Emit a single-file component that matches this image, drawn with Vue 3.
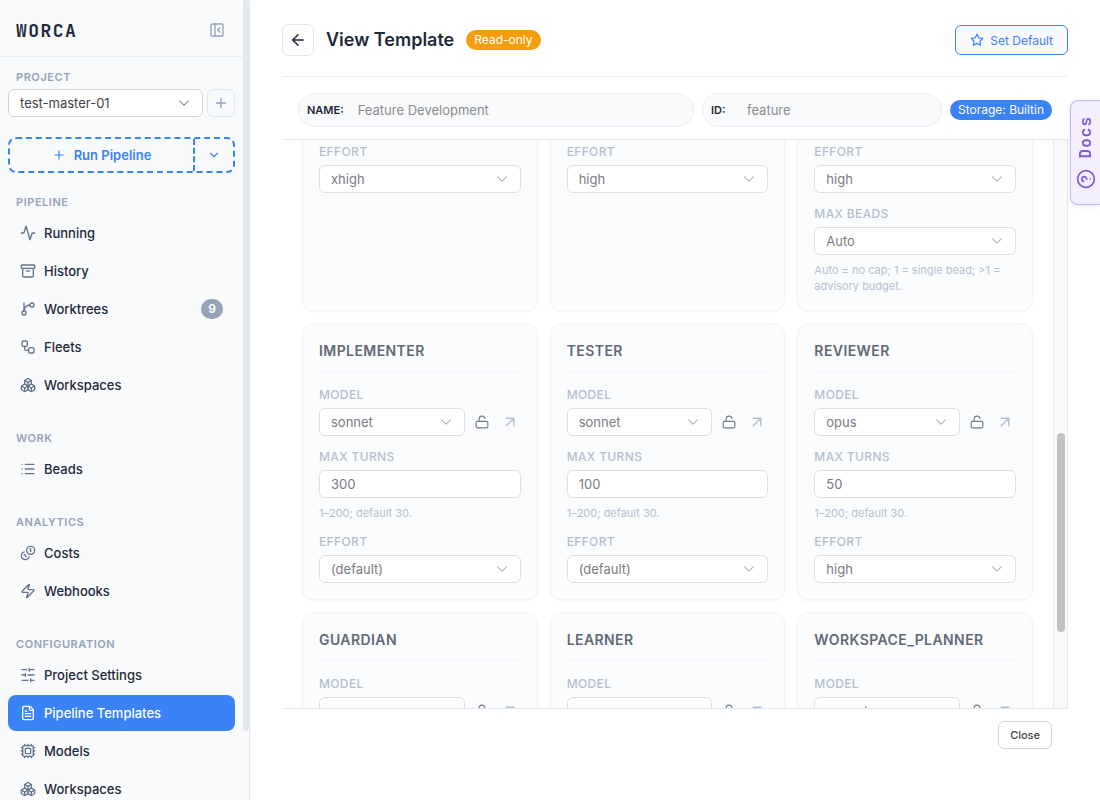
<template>
    <div class="layout">
        <aside class="sidebar">
            <div class="sidebar-content">
                <header class="brand">
                    <span class="logo">WORCA</span>
                    <button class="collapse-btn" aria-label="Collapse sidebar">
                        <svg class="icon" viewBox="0 0 24 24">
                            <rect x="3" y="3" width="18" height="18" rx="2" />
                            <path d="M9 3v18M16 15l-3-3 3-3" />
                        </svg>
                    </button>
                </header>

                <div class="project">
                    <label class="section-title" for="project">Project</label>
                    <div class="project-row">
                        <div class="select-wrap project-select">
                            <select id="project" v-model="project">
                                <option>test-master-01</option>
                            </select>
                            <svg class="chevron" viewBox="0 0 16 16"><path :d="chevron" /></svg>
                        </div>
                        <button class="add-btn" aria-label="Add project">
                            <svg class="icon" viewBox="0 0 24 24"><path d="M5 12h14M12 5v14" /></svg>
                        </button>
                    </div>
                    <div class="run-group">
                        <button class="run-btn">
                            <svg class="icon" viewBox="0 0 24 24"><path d="M5 12h14M12 5v14" /></svg>
                            Run Pipeline
                        </button>
                        <button class="run-more" aria-label="More run options">
                            <svg class="icon" viewBox="0 0 24 24"><path d="m6 9 6 6 6-6" /></svg>
                        </button>
                    </div>
                </div>

                <nav>
                    <section v-for="section in sections" :key="section.title" class="nav-section">
                        <h2 class="section-title">{{ section.title }}</h2>
                        <a
                            v-for="item in section.items"
                            :key="item.label"
                            href="#"
                            class="nav-item"
                            :class="{ active: item.active }"
                        >
                            <svg class="icon" viewBox="0 0 24 24">
                                <path v-for="d in icons[item.icon]" :key="d" :d="d" />
                            </svg>
                            <span>{{ item.label }}</span>
                            <span v-if="item.count" class="count">{{ item.count }}</span>
                        </a>
                    </section>
                </nav>
            </div>
            <div class="sidebar-scroll"><div class="sidebar-thumb"></div></div>
        </aside>

        <main class="main">
            <header class="page-header">
                <button class="back-btn" aria-label="Back">
                    <svg class="icon" viewBox="0 0 24 24"><path d="m12 19-7-7 7-7M19 12H5" /></svg>
                </button>
                <h1>View Template</h1>
                <span class="badge warning">Read-only</span>
                <button class="default-btn">
                    <svg class="icon" viewBox="0 0 24 24">
                        <path d="M12 2l3.09 6.26L22 9.27l-5 4.87 1.18 6.88L12 17.77l-6.18 3.25L7 14.14 2 9.27l6.91-1.01L12 2z" />
                    </svg>
                    Set Default
                </button>
            </header>

            <div class="meta-bar">
                <div class="pill pill-name">
                    <label for="tpl-name">NAME:</label>
                    <input id="tpl-name" type="text" value="Feature Development" disabled />
                </div>
                <div class="pill pill-id">
                    <label for="tpl-id">ID:</label>
                    <input id="tpl-id" type="text" value="feature" disabled />
                </div>
                <span class="badge primary">Storage: Builtin</span>
            </div>

            <div class="scroll-area">
                <div class="agents">
                    <article
                        v-for="(agent, i) in agents"
                        :key="i"
                        class="card"
                        :class="{ continued: !agent.name }"
                    >
                        <h3 v-if="agent.name">{{ agent.name }}</h3>
                        <div v-for="field in agent.fields" :key="field.label" class="field">
                            <label :for="fieldId(i, field)">{{ field.label }}</label>
                            <div class="control-row">
                                <input
                                    v-if="field.type === 'number'"
                                    :id="fieldId(i, field)"
                                    class="text-input"
                                    type="text"
                                    :value="field.value"
                                    disabled
                                />
                                <div v-else class="select-wrap">
                                    <select :id="fieldId(i, field)" disabled>
                                        <option>{{ field.value }}</option>
                                    </select>
                                    <svg class="chevron" viewBox="0 0 16 16"><path :d="chevron" /></svg>
                                </div>
                                <template v-if="field.type === 'model'">
                                    <button class="icon-btn lock" aria-label="Unlock model" disabled>
                                        <svg class="icon" viewBox="0 0 24 24">
                                            <rect x="2" y="11" width="20" height="11" rx="2" />
                                            <path d="M7 11V7a5 5 0 0 1 9.9-1" />
                                        </svg>
                                    </button>
                                    <button class="icon-btn open" aria-label="Open model" disabled>
                                        <svg class="icon" viewBox="0 0 24 24"><path d="M7 7h10v10M7 17 17 7" /></svg>
                                    </button>
                                </template>
                            </div>
                            <p v-if="field.hint" class="hint">{{ field.hint }}</p>
                        </div>
                    </article>
                </div>
                <div class="track"><div class="thumb"></div></div>
            </div>

            <footer class="page-footer">
                <button class="close-btn">Close</button>
            </footer>
        </main>

        <button class="docs-tab">
            <span>Docs</span>
            <svg class="icon" viewBox="0 0 24 24">
                <circle cx="12" cy="12" r="10" />
                <path d="M9.09 9a3 3 0 0 1 5.83 1c0 2-3 3-3 3M12 17h.01" />
            </svg>
        </button>
    </div>
</template>

<script setup>
import { ref } from 'vue';

const project = ref('test-master-01');

const chevron = 'M1.646 4.646a.5.5 0 0 1 .708 0L8 10.293l5.646-5.647a.5.5 0 0 1 .708.708l-6 6a.5.5 0 0 1-.708 0l-6-6a.5.5 0 0 1 0-.708z';

const icons = {
    activity: ['M22 12h-2.48a2 2 0 0 0-1.93 1.46l-2.35 8.36a.25.25 0 0 1-.48 0L9.24 2.18a.25.25 0 0 0-.48 0l-2.35 8.36A2 2 0 0 1 4.49 12H2'],
    archive: ['M3 3h18a1 1 0 0 1 1 1v3a1 1 0 0 1-1 1H3a1 1 0 0 1-1-1V4a1 1 0 0 1 1-1z', 'M4 8v11a2 2 0 0 0 2 2h12a2 2 0 0 0 2-2V8', 'M10 12h4'],
    branch: ['M6 3v12', 'M21 6a3 3 0 1 1-6 0 3 3 0 0 1 6 0z', 'M9 18a3 3 0 1 1-6 0 3 3 0 0 1 6 0z', 'M15 6a9 9 0 0 0-9 9'],
    workflow: ['M5 3h4a2 2 0 0 1 2 2v4a2 2 0 0 1-2 2H5a2 2 0 0 1-2-2V5a2 2 0 0 1 2-2z', 'M7 11v4a2 2 0 0 0 2 2h4', 'M15 13h4a2 2 0 0 1 2 2v4a2 2 0 0 1-2 2h-4a2 2 0 0 1-2-2v-4a2 2 0 0 1 2-2z'],
    boxes: [
        'M2.97 12.92A2 2 0 0 0 2 14.63v3.24a2 2 0 0 0 .97 1.71l3 1.8a2 2 0 0 0 2.06 0L12 19v-5.5l-5-3-4.03 2.42Z',
        'm7 16.5-4.74-2.85',
        'm7 16.5 5-3',
        'M7 16.5v5.17',
        'M12 13.5V19l3.97 2.38a2 2 0 0 0 2.06 0l3-1.8a2 2 0 0 0 .97-1.71v-3.24a2 2 0 0 0-.97-1.71L17 10.5l-5 3Z',
        'm17 16.5-5-3',
        'm17 16.5 4.74-2.85',
        'M17 16.5v5.17',
        'M7.97 4.42A2 2 0 0 0 7 6.13v4.37l5 3 5-3V6.13a2 2 0 0 0-.97-1.71l-3-1.8a2 2 0 0 0-2.06 0l-3 1.8Z',
        'M12 8 7.26 5.15',
        'm12 8 4.74-2.85',
        'M12 13.5V8'
    ],
    list: ['M3 5h.01', 'M3 12h.01', 'M3 19h.01', 'M8 5h13', 'M8 12h13', 'M8 19h13'],
    coins: ['M22 8a6 6 0 1 1-12 0 6 6 0 0 1 12 0z', 'M15 6h1v4', 'm6.134 14.768.866-.5 2 3.464', 'M13.744 17.736a6 6 0 1 1-7.48-7.48'],
    zap: ['M4 14a1 1 0 0 1-.78-1.63l9.9-10.2a.5.5 0 0 1 .86.46l-1.92 6.02A1 1 0 0 0 13 10h7a1 1 0 0 1 .78 1.63l-9.9 10.2a.5.5 0 0 1-.86-.46l1.92-6.02A1 1 0 0 0 11 14z'],
    sliders: ['M21 4h-7', 'M10 4H3', 'M21 12h-9', 'M8 12H3', 'M21 20h-5', 'M12 20H3', 'M14 2v4', 'M8 10v4', 'M16 18v4'],
    file: ['M15 2H6a2 2 0 0 0-2 2v16a2 2 0 0 0 2 2h12a2 2 0 0 0 2-2V7Z', 'M14 2v4a2 2 0 0 0 2 2h4', 'M10 9H8', 'M16 13H8', 'M16 17H8'],
    cpu: [
        'M6 4h12a2 2 0 0 1 2 2v12a2 2 0 0 1-2 2H6a2 2 0 0 1-2-2V6a2 2 0 0 1 2-2z',
        'M9 8h6a1 1 0 0 1 1 1v6a1 1 0 0 1-1 1H9a1 1 0 0 1-1-1V9a1 1 0 0 1 1-1z',
        'M12 20v2M12 2v2M17 20v2M17 2v2M7 20v2M7 2v2',
        'M2 12h2M2 17h2M2 7h2M20 12h2M20 17h2M20 7h2'
    ]
};

const sections = [
    {
        title: 'Pipeline',
        items: [
            { label: 'Running', icon: 'activity' },
            { label: 'History', icon: 'archive' },
            { label: 'Worktrees', icon: 'branch', count: 9 },
            { label: 'Fleets', icon: 'workflow' },
            { label: 'Workspaces', icon: 'boxes' }
        ]
    },
    { title: 'Work', items: [{ label: 'Beads', icon: 'list' }] },
    {
        title: 'Analytics',
        items: [
            { label: 'Costs', icon: 'coins' },
            { label: 'Webhooks', icon: 'zap' }
        ]
    },
    {
        title: 'Configuration',
        items: [
            { label: 'Project Settings', icon: 'sliders' },
            { label: 'Pipeline Templates', icon: 'file', active: true },
            { label: 'Models', icon: 'cpu' },
            { label: 'Workspaces', icon: 'boxes' }
        ]
    }
];

const effort = (value) => ({ label: 'Effort', type: 'select', value });
const model = (value) => ({ label: 'Model', type: 'model', value });
const turns = (value) => ({ label: 'Max Turns', type: 'number', value, hint: '1–200; default 30.' });

// agents without a name are the ones scrolled half out of view
const agents = [
    { fields: [effort('xhigh')] },
    { fields: [effort('high')] },
    {
        fields: [
            effort('high'),
            { label: 'Max Beads', type: 'select', value: 'Auto', hint: 'Auto = no cap; 1 = single bead; >1 = advisory budget.' }
        ]
    },
    { name: 'Implementer', fields: [model('sonnet'), turns(300), effort('(default)')] },
    { name: 'Tester', fields: [model('sonnet'), turns(100), effort('(default)')] },
    { name: 'Reviewer', fields: [model('opus'), turns(50), effort('high')] },
    { name: 'Guardian', fields: [model('opus')] },
    { name: 'Learner', fields: [model('opus')] },
    { name: 'Workspace_Planner', fields: [model('sonnet')] }
];

const fieldId = (index, field) => `agent-${index}-${field.label.toLowerCase().replace(' ', '-')}`;
</script>

<style>
body {
    margin: 0;
    background-color: #fff;
}
</style>

<style scoped>
* {
    box-sizing: border-box;
}

.layout {
    display: flex;
    height: 100vh;
    overflow: hidden;
    font-family: Inter, "Liberation Sans", sans-serif;
    font-size: 13px;
    color: #1e293b;
}

button, input, select {
    font: inherit;
    margin: 0;
}

button {
    display: flex;
    align-items: center;
    justify-content: center;
    padding: 0;
    background: none;
    border: none;
    cursor: pointer;
}

.icon {
    width: 16px;
    height: 16px;
    flex-shrink: 0;
    fill: none;
    stroke: currentColor;
    stroke-width: 2;
    stroke-linecap: round;
    stroke-linejoin: round;
}

/* sidebar */
.sidebar {
    display: flex;
    width: 250px;
    flex-shrink: 0;
    background-color: #f8fafc;
    border-right: 1px solid #e2e8f0;
    overflow: hidden;
}

.sidebar-content {
    flex: 1;
}

.sidebar-scroll {
    width: 6px;
}

.sidebar-thumb {
    height: 91.4%;
    background-color: #e2e8f0;
    border-radius: 3px;
}

.brand {
    display: flex;
    align-items: center;
    justify-content: space-between;
    height: 57px;
    padding: 4px 18px 0 16px;
    border-bottom: 1px solid #e9eef4;
}

.logo {
    font-family: "JetBrains Mono", "Liberation Mono", monospace;
    font-size: 18px;
    font-weight: 700;
    letter-spacing: 0.08em;
}

.collapse-btn {
    color: #94a3b8;
}

.project {
    padding: 12px 8px 0;
}

.section-title {
    display: block;
    margin: 0;
    padding-left: 8px;
    font-size: 11px;
    font-weight: 600;
    line-height: 16px;
    letter-spacing: 0.05em;
    text-transform: uppercase;
    color: #94a3b8;
}

.project-row {
    display: flex;
    gap: 4px;
    margin-top: 4px;
}

.add-btn {
    width: 28px;
    border: 1px solid #e2e8f0;
    border-radius: 6px;
    color: #94a3b8;
}

.run-group {
    display: flex;
    height: 36px;
    margin-top: 20px;
    border: 2px dashed #3b82f6;
    border-radius: 8px;
    color: #3b82f6;
}

.run-btn {
    flex: 1;
    gap: 8px;
    color: inherit;
    font-weight: 600;
}

.run-btn .icon {
    width: 14px;
    height: 14px;
}

.run-more {
    width: 40px;
    border-left: 2px dashed #3b82f6;
    color: inherit;
}

.run-more .icon {
    width: 14px;
    height: 14px;
}

.nav-section {
    display: flex;
    flex-direction: column;
    gap: 2px;
    padding: 21px 8px 6px;
}

.nav-section .section-title {
    padding-bottom: 3px;
}

.nav-item {
    display: flex;
    align-items: center;
    gap: 8px;
    height: 36px;
    padding: 0 12px;
    border-radius: 8px;
    color: #1e293b;
    font-size: 13px;
    font-weight: 500;
    text-decoration: none;
}

.nav-item .icon {
    color: #64748b;
}

.nav-item.active, .nav-item.active .icon {
    color: #fff;
}

.nav-item.active {
    background-color: #3b82f6;
}

.count {
    width: 22px;
    margin-left: auto;
    border-radius: 10px;
    background-color: #94a3b8;
    color: #fff;
    font-size: 12px;
    font-weight: 600;
    line-height: 20px;
    text-align: center;
}

/* page */
.main {
    display: flex;
    flex-direction: column;
    flex: 1;
    min-width: 0;
    padding: 0 32px 51px;
}

.page-header {
    display: flex;
    align-items: center;
    gap: 12px;
    padding: 24px 0 20px;
    border-bottom: 1px solid #e9eef4;
}

.back-btn {
    width: 32px;
    height: 32px;
    border: 1px solid #e2e8f0;
    border-radius: 6px;
    color: #1e293b;
}

.back-btn .icon {
    width: 18px;
    height: 18px;
}

h1 {
    margin: 0;
    font-size: 18px;
    font-weight: 600;
    line-height: 24px;
}

.badge {
    padding: 0 8px;
    border-radius: 10px;
    color: #fff;
    font-size: 12px;
    line-height: 20px;
    white-space: nowrap;
}

.warning {
    background-color: #f59e0b;
}

.primary {
    background-color: #3b82f6;
}

.default-btn {
    gap: 6px;
    height: 30px;
    margin-left: auto;
    padding: 0 14px;
    border: 1px solid #3b82f6;
    border-radius: 6px;
    background-color: #f8fafc;
    color: #3b82f6;
    font-size: 12px;
}

.default-btn .icon {
    width: 14px;
    height: 14px;
}

.meta-bar {
    display: flex;
    align-items: center;
    gap: 8px;
    padding: 16px 16px 12px;
    border-bottom: 1px solid #e2e8f0;
}

.pill {
    display: flex;
    align-items: center;
    height: 34px;
    padding: 0 8px;
    border: 1px solid #e9eef5;
    border-radius: 17px;
    background-color: #f8fafc;
}

.pill-name {
    flex: 1;
}

.pill-id {
    width: 240px;
}

.pill label {
    min-width: 22px;
    font-size: 11px;
    font-weight: 600;
}

.pill input {
    flex: 1;
    min-width: 0;
    padding: 0 14px;
    border: none;
    background: none;
    color: #8b8c8f;
}

.scroll-area {
    display: flex;
    flex: 1;
    min-height: 0;
    overflow: hidden;
    border-bottom: 1px solid #e2e8f0;
}

.agents {
    display: grid;
    flex: 1;
    grid-template-columns: repeat(3, minmax(0, 1fr));
    align-content: start;
    gap: 12px;
    padding: 0 20px;
}

.card {
    padding: 16px;
    border: 1px solid #f1f4f9;
    border-radius: 12px;
    background-color: #fbfcfe;
    box-shadow: 0 1px 3px rgba(0, 0, 0, 0.05);
}

.continued {
    padding-top: 3px;
    border-top: none;
    border-radius: 0 0 12px 12px;
}

.card h3 {
    margin: 0 0 14px;
    padding-bottom: 9px;
    border-bottom: 1px solid #f1f4f8;
    color: #626975;
    font-size: 14px;
    font-weight: 600;
    line-height: 22px;
    letter-spacing: 0.03em;
    text-transform: uppercase;
}

.field + .field {
    margin-top: 12px;
}

.field label {
    display: block;
    margin-bottom: 4px;
    color: #b4bfce;
    font-size: 12px;
    font-weight: 500;
    line-height: 18px;
    letter-spacing: 0.03em;
    text-transform: uppercase;
}

.control-row {
    display: flex;
    gap: 6px;
}

.select-wrap {
    display: grid;
    flex: 1;
    align-items: center;
    min-width: 0;
}

.select-wrap select, .text-input {
    width: 100%;
    height: 28px;
    padding: 0 11px;
    border: 1px solid #dfdfe2;
    border-radius: 6px;
    background-color: #fff;
    color: #7b7b7f;
    opacity: 1;
    appearance: none;
}

.select-wrap select, .chevron {
    grid-area: 1 / 1;
}

.chevron {
    justify-self: end;
    width: 12px;
    height: 12px;
    margin-right: 13px;
    fill: #8f9299;
    pointer-events: none;
}

.project-select select {
    border-color: #d4d4d8;
    color: #3f3f46;
}

.project-select .chevron {
    fill: #52525b;
}

.icon-btn {
    width: 22px;
}

.lock {
    color: #777e8a;
}

.lock .icon {
    width: 14px;
    height: 14px;
}

.open {
    color: #b4c0cf;
}

.open .icon {
    width: 18px;
    height: 18px;
}

.hint {
    margin: 7px 0 0;
    color: #b4bfce;
    font-size: 11px;
    line-height: 16px;
}

.track {
    position: relative;
    width: 15px;
    border: solid #e8e8e8;
    border-width: 0 1px;
    background-color: #fafafa;
}

.thumb {
    position: absolute;
    top: 51.5%;
    left: 3px;
    width: 8px;
    height: 35.2%;
    border-radius: 4px;
    background-color: #c1c1c1;
}

.page-footer {
    display: flex;
    justify-content: flex-end;
    padding: 12px 16px 0;
}

.close-btn {
    height: 28px;
    padding: 0 11px;
    border: 1px solid #d4d4d8;
    border-radius: 6px;
    background-color: #fff;
    color: #3f3f46;
    font-size: 11px;
    font-weight: 500;
}

.docs-tab {
    position: fixed;
    top: 100px;
    right: 0;
    flex-direction: column;
    gap: 10px;
    width: 30px;
    height: 105px;
    border: 1px solid #c4b5fd;
    border-right: none;
    border-radius: 8px 0 0 8px;
    background-color: #f3efff;
    box-shadow: 0 1px 6px rgba(0, 0, 0, 0.08);
    color: #805ad5;
}

.docs-tab span {
    font-family: "JetBrains Mono", "Liberation Mono", monospace;
    font-size: 16px;
    font-weight: 700;
    letter-spacing: 1px;
    writing-mode: vertical-rl;
    transform: rotate(180deg);
}

.docs-tab .icon {
    width: 20px;
    height: 20px;
    transform: rotate(-90deg);
}
</style>
